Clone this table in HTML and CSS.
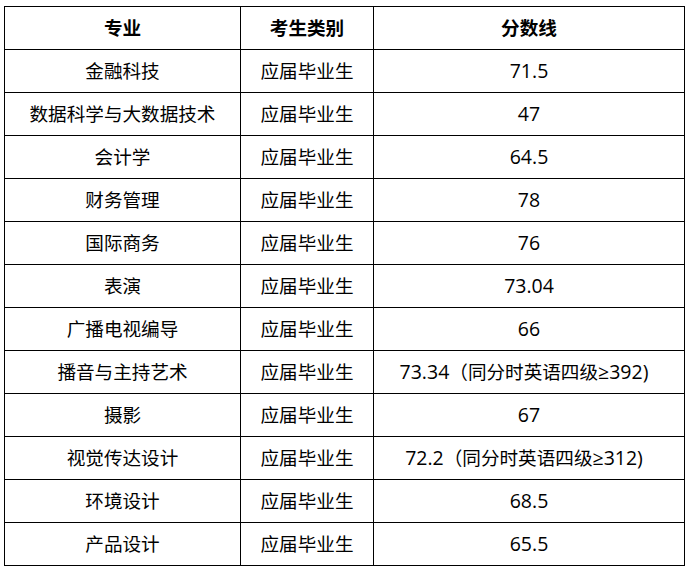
FILE: index.html
```html
<!DOCTYPE html>
<html lang="zh">
<head>
<meta charset="utf-8">
<link rel="stylesheet" href="styles.css">
</head>
<body>
<table class="score-table">
  <colgroup>
    <col class="c1"><col class="c2"><col class="c3">
  </colgroup>
  <thead>
    <tr><th>专业</th><th>考生类别</th><th>分数线</th></tr>
  </thead>
  <tbody>
    <tr><td>金融科技</td><td>应届毕业生</td><td><span class="num">71.5</span></td></tr>
    <tr><td>数据科学与大数据技术</td><td>应届毕业生</td><td><span class="num">47</span></td></tr>
    <tr><td>会计学</td><td>应届毕业生</td><td><span class="num">64.5</span></td></tr>
    <tr><td>财务管理</td><td>应届毕业生</td><td><span class="num">78</span></td></tr>
    <tr><td>国际商务</td><td>应届毕业生</td><td><span class="num">76</span></td></tr>
    <tr><td>表演</td><td>应届毕业生</td><td><span class="num">73.04</span></td></tr>
    <tr><td>广播电视编导</td><td>应届毕业生</td><td><span class="num">66</span></td></tr>
    <tr><td>播音与主持艺术</td><td>应届毕业生</td><td class="note"><span class="num">73.34</span>（同分时英语四级<span class="num">≥392)</span></td></tr>
    <tr><td>摄影</td><td>应届毕业生</td><td><span class="num">67</span></td></tr>
    <tr><td>视觉传达设计</td><td>应届毕业生</td><td class="note"><span class="num">72.2</span>（同分时英语四级<span class="num">≥312)</span></td></tr>
    <tr><td>环境设计</td><td>应届毕业生</td><td><span class="num">68.5</span></td></tr>
    <tr><td>产品设计</td><td>应届毕业生</td><td><span class="num">65.5</span></td></tr>
  </tbody>
</table>
</body>
</html>
```
FILE: styles.css
```css
html, body {
  margin: 0;
  padding: 0;
  background: #fff;
}
body {
  padding: 6px 0 0 4px;
  font-family: "Noto Sans CJK SC", sans-serif;
  color: #000;
}
.score-table {
  border-collapse: collapse;
  table-layout: fixed;
  width: 680px;
}
.c1 { width: 236px; }
.c2 { width: 133px; }
.c3 { width: 311px; }
.score-table th,
.score-table td {
  border: 1px solid #000;
  height: 40px;
  padding: 0 0 2px;
  text-align: center;
  vertical-align: middle;
  font-size: 18.6px;
  line-height: 1;
  white-space: nowrap;
}
.score-table th {
  font-weight: 700;
}
.score-table td {
  font-weight: 400;
}
.score-table td.note {
  padding-right: 10px;
}
.num {
  font-family: "Open Sans", "Noto Sans CJK SC", sans-serif;
  font-size: 19.5px;
  line-height: 0;
}
```
